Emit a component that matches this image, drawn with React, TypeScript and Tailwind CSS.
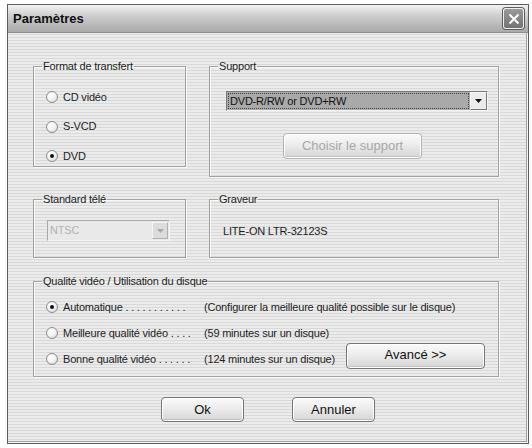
import type { ReactNode } from "react";

const FONT = "font-['Liberation_Sans',Arial,sans-serif]";

function Group({
  title,
  className,
  children,
}: {
  title: string;
  className: string;
  children: ReactNode;
}) {
  return (
    <fieldset
      className={`border border-[#a3a3a3] shadow-[inset_1px_1px_0_#f8f8f8,1px_1px_0_#f8f8f8] ${className}`}
    >
      <legend className="ml-[8px] px-[1px] text-[11px] leading-[13px] text-[#1e1e1e]">
        {title}
      </legend>
      {children}
    </fieldset>
  );
}

function Radio({ checked }: { checked?: boolean }) {
  return (
    <span className="flex h-[12px] w-[12px] shrink-0 items-center justify-center rounded-full border border-[#8c8c8c] bg-[radial-gradient(circle_at_35%_30%,#ffffff_0%,#f4f4f4_45%,#cfcfcf_100%)]">
      {checked && <span className="h-[4px] w-[4px] rounded-full bg-[#111]" />}
    </span>
  );
}

function Option({ label, checked }: { label: string; checked?: boolean }) {
  return (
    <div className="flex h-[16px] items-center">
      <Radio checked={checked} />
      <span className="ml-[5px] text-[11px] text-[#1e1e1e]">{label}</span>
    </div>
  );
}

function Button({
  children,
  className,
  disabled,
}: {
  children: ReactNode;
  className: string;
  disabled?: boolean;
}) {
  return (
    <div
      className={`flex items-center justify-center rounded-[4px] border bg-[linear-gradient(#fbfbfb,#ececec_45%,#d4d4d4)] shadow-[inset_0_0_0_1px_#ffffff,inset_0_-2px_0_#c2c2c2] text-[13px] tracking-normal ${
        disabled ? "border-[#b4b4b4] text-[#a8a8a8]" : "border-[#767676] text-[#111]"
      } ${className}`}
    >
      {children}
    </div>
  );
}

function Arrow({ color }: { color: string }) {
  return (
    <svg width="7" height="4" viewBox="0 0 7 4">
      <path d="M0 0h7L3.5 4z" fill={color} />
    </svg>
  );
}

export default function App() {
  return (
    <div className={`h-[448px] w-[532px] bg-white pl-[7px] pt-[4px] tracking-[-0.2px] ${FONT}`}>
      <div className="flex h-[440px] w-[522px] flex-col border border-[#5e5e5e] bg-[repeating-linear-gradient(180deg,#ebebeb_0px,#ebebeb_2px,#d9d9d9_2px,#d9d9d9_3px)] shadow-[inset_-1px_-1px_0_#f4f4f4,inset_-2px_-2px_0_#a4a4a4]">
        <div className="flex h-[28px] items-center justify-between border-b border-[#8e8e8e] bg-[linear-gradient(#f2f2f2,#d2d2d2_35%,#b4b4b4_80%,#aaaaaa)] pl-[5px] pr-[4px]">
          <span className="text-[13px] font-bold tracking-normal text-[#101010]">Paramètres</span>
          <div className="flex h-[21px] w-[21px] items-center justify-center rounded-[3px] border border-[#eeeeee] bg-[linear-gradient(#9a9a9a,#727272)] shadow-[0_0_0_1px_#5e5e5e]">
            <svg width="12" height="12" viewBox="0 0 12 12">
              <path d="M1.5 1.5l9 9M10.5 1.5l-9 9" stroke="#fff" strokeWidth="2" />
            </svg>
          </div>
        </div>

        <div className="flex flex-col pl-[25px]">
          <div className="mt-[27px] flex items-start gap-[23px]">
            <Group title="Format de transfert" className="h-[107px] w-[153px]">
              <div className="mt-[16px] flex flex-col gap-[13.5px] pl-[12px]">
                <Option label="CD vidéo" />
                <Option label="S-VCD" />
                <Option label="DVD" checked />
              </div>
            </Group>
            <Group title="Support" className="h-[117px] w-[290px]">
              <div className="mt-[18px] ml-[16px] flex h-[20px] w-[262px] items-center border border-[#7a7a7a] border-b-[#f4f4f4] border-r-[#f4f4f4] bg-[#a9a9a9]">
                <div className="mx-[1px] flex h-[16px] flex-1 items-center border border-dotted border-[#444] pl-[1px] text-[11px] text-[#111]">
                  DVD-R/RW or DVD+RW
                </div>
                <div className="flex h-[18px] w-[17px] items-center justify-center border border-[#f8f8f8] border-b-[#7a7a7a] border-r-[#7a7a7a] bg-[#ececec]">
                  <Arrow color="#111" />
                </div>
              </div>
              <Button disabled className="mt-[22px] ml-[73px] h-[26px] w-[139px]">
                Choisir le support
              </Button>
            </Group>
          </div>

          <div className="mt-[16px] flex items-start gap-[23px]">
            <Group title="Standard télé" className="h-[65px] w-[153px]">
              <div className="mt-[14px] ml-[13px] flex h-[21px] w-[123px] items-center border border-[#a8a8a8] border-b-[#f4f4f4] border-r-[#f4f4f4] bg-[#e9e9e9]">
                <span className="flex-1 pl-[2px] text-[11px] text-[#b2b2b2]">NTSC</span>
                <div className="mr-[1px] flex h-[17px] w-[16px] items-center justify-center border border-[#f4f4f4] border-b-[#b0b0b0] border-r-[#b0b0b0] bg-[#dcdcdc]">
                  <Arrow color="#a8a8a8" />
                </div>
              </div>
            </Group>
            <Group title="Graveur" className="h-[65px] w-[290px]">
              <div className="mt-[17px] ml-[13px] flex h-[16px] items-center text-[11px] text-[#1e1e1e]">
                LITE-ON LTR-32123S
              </div>
            </Group>
          </div>

          <Group title="Qualité vidéo / Utilisation du disque" className="mt-[17px] h-[102px] w-[466px]">
            <div className="mt-[11px] flex flex-col pl-[12px] pr-[13px] text-[11px] text-[#1e1e1e]">
              <div className="flex h-[16px] items-center">
                <div className="w-[158px] shrink-0">
                  <Option label="Automatique . . . . . . . . . . ." checked />
                </div>
                <span>(Configurer la meilleure qualité possible sur le disque)</span>
              </div>
              <div className="mt-[10px] flex h-[16px] items-center">
                <div className="w-[158px] shrink-0">
                  <Option label="Meilleure qualité vidéo . . . ." />
                </div>
                <span>(59 minutes sur un disque)</span>
              </div>
              <div className="mt-[2px] flex h-[26px]">
                <div className="mb-[2px] flex h-[16px] items-center self-end">
                  <div className="w-[158px] shrink-0">
                    <Option label="Bonne qualité vidéo . . . . . ." />
                  </div>
                  <span>(124 minutes sur un disque)</span>
                </div>
                <Button className="ml-auto h-[26px] w-[139px] pb-[3px]">Avancé &gt;&gt;</Button>
              </div>
            </div>
          </Group>

          <div className="mt-[20px] flex justify-center gap-[48px] pr-[25px]">
            <Button className="h-[25px] w-[83px]">Ok</Button>
            <Button className="h-[25px] w-[83px]">Annuler</Button>
          </div>
        </div>
      </div>
    </div>
  );
}
